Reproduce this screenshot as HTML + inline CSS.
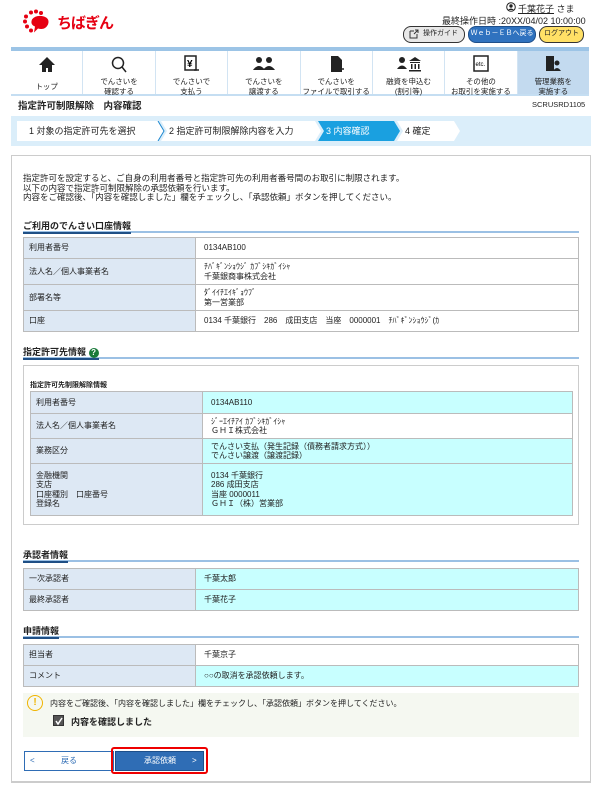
<!DOCTYPE html>
<html><head><meta charset="utf-8">
<style>
*{margin:0;padding:0;box-sizing:border-box}
body{width:600px;height:796px;background:#fff;font-family:"Liberation Sans","Noto Sans CJK JP",sans-serif;font-size:8.5px;color:#222;position:relative;overflow:hidden}
.a{position:absolute}
.nav{left:11px;top:47px;width:578px;height:49px;border-top:4px solid #9cc4e6;border-bottom:2px solid #c5def2;display:flex}
.nav div{flex:1;border-right:1px solid #d2e4f3;text-align:center;font-size:7.5px;line-height:10px;padding-top:4px;position:relative}
.nav div:last-child{border-right:none;background:#c3daef}
.nav svg{display:block;margin:0 auto 4px;height:18px}
.steps{left:11px;top:116px;width:580px;height:30px;background:#dbeefa}
.st{position:absolute;top:5px;height:20px;line-height:20px;font-size:9px;padding-left:12px}
.box{left:11px;top:155px;width:580px;height:628px;border:1px solid #ccc;border-bottom:2px solid #ccc}
h3{position:absolute;font-size:9px;font-weight:bold;left:23px;width:556px;border-bottom:2px solid #9bc0e4;height:12px;line-height:11px}
h3 span{border-bottom:2px solid #1f4f85;display:inline-block;height:13px}
table{position:absolute;border-collapse:collapse;font-size:8px}
td{border:1px solid #bbb;padding:0 8px 0 8px;line-height:9.5px}
td.l{background:#dde8f4;width:172px;padding-left:5px}
td.c{background:#c8ffff}
</style></head><body>
<svg class="a" style="left:22px;top:9px" width="30" height="27" viewBox="0 0 30 26">
<g fill="#e60012"><circle cx="9" cy="3" r="2"/><circle cx="14" cy="2" r="2"/><circle cx="19" cy="3.5" r="2"/><circle cx="4" cy="7" r="2"/><circle cx="3" cy="12" r="2"/><circle cx="5" cy="17" r="2"/><circle cx="9" cy="21" r="2"/>
<path d="M10 10 Q14 5 22 7 Q28 9 26 15 Q23 21 16 19 L12 23 L13 17 Q8 15 10 10Z"/></g></svg>
<div class="a" style="left:57px;top:12px;font-size:15px;font-weight:bold;color:#e60012;letter-spacing:-1px">ちばぎん</div>
<svg class="a" style="left:506px;top:2px" width="10" height="10" viewBox="0 0 10 10"><circle cx="5" cy="5" r="4.3" fill="none" stroke="#222"/><circle cx="5" cy="4" r="1.7" fill="#222"/><path d="M2 8 Q5 5 8 8" fill="#222"/></svg>
<div class="a" style="left:518px;top:2px;font-size:9px"><u>千葉花子</u> さま</div>
<div class="a" style="left:442px;top:14px;font-size:9px">最終操作日時 :20XX/04/02 10:00:00</div>
<div class="a" style="left:403px;top:26px;width:62px;height:17px;border:1.5px solid #333;border-radius:8px;background:#e8e8e8;font-size:7px;line-height:14px;padding-left:19px">操作ガイド</div>
<svg class="a" style="left:409px;top:29px" width="10" height="10" viewBox="0 0 10 10"><path d="M1 2h4M1 2v7h7V5M5 5l4-4M6 1h3v3" fill="none" stroke="#333"/></svg>
<div class="a" style="left:468px;top:26px;width:68px;height:17px;border:1.5px solid #1e4f8a;border-radius:8px;background:#2f72bf;color:#fff;font-size:7px;line-height:14px;text-align:center">Ｗｅｂ－ＥＢへ戻る</div>
<div class="a" style="left:539px;top:26px;width:45px;height:17px;border:1.5px solid #333;border-radius:8px;background:#ffe066;font-size:7px;line-height:14px;text-align:center">ログアウト</div>
<div class="a nav">
<div><svg viewBox="0 0 20 18" width="20"><path d="M10 2L2 10h3v7h4v-4h2v4h4v-7h3z" fill="#222"/></svg><span style="position:relative;top:5px">トップ</span></div>
<div><svg viewBox="0 0 20 18" width="20"><circle cx="9" cy="8" r="5.5" fill="none" stroke="#222" stroke-width="1.5"/><path d="M13 12l4 5" stroke="#222" stroke-width="1.5"/></svg>でんさいを<br>確認する</div>
<div><svg viewBox="0 0 20 18" width="20"><rect x="4" y="1" width="11" height="14" fill="none" stroke="#222" stroke-width="1.5"/><text x="6" y="12" font-size="10" font-weight="bold">¥</text><path d="M13 15h5" stroke="#222" stroke-width="1.5"/></svg>でんさいで<br>支払う</div>
<div><svg viewBox="0 0 24 18" width="24"><circle cx="7" cy="5" r="3" fill="#222"/><circle cx="17" cy="5" r="3" fill="#222"/><path d="M1 15Q7 7 13 15zM11 15Q17 7 23 15z" fill="#222"/></svg>でんさいを<br>譲渡する</div>
<div><svg viewBox="0 0 20 18" width="20"><path d="M5 1h7l4 4v12H5z" fill="#222"/><path d="M12 14h6" stroke="#222" stroke-width="1.5"/></svg>でんさいを<br>ファイルで取引する</div>
<div><svg viewBox="0 0 26 18" width="26"><circle cx="6" cy="5" r="3" fill="#222"/><path d="M1 14Q6 7 11 14z" fill="#222"/><path d="M13 6l6-4 6 4zM14 7h10v1H14zM15 9h1.5v5H15zM18.5 9H20v5h-1.5zM22 9h1.5v5H22zM13 15h12v1.5H13z" fill="#222"/></svg>融資を申込む<br>(割引等)</div>
<div><svg viewBox="0 0 20 18" width="20"><rect x="3" y="1" width="14" height="15" fill="none" stroke="#222" stroke-width="1.5"/><text x="4.5" y="11" font-size="6">etc.</text></svg>その他の<br>お取引を実施する</div>
<div><svg viewBox="0 0 20 18" width="20"><rect x="3" y="1" width="8" height="15" fill="#222"/><circle cx="14" cy="8" r="2.5" fill="#222"/><path d="M10 16Q14 10 18 16z" fill="#222"/></svg>管理業務を<br>実施する</div>
</div>
<div class="a" style="left:18px;top:98px;font-size:9.5px;font-weight:bold">指定許可制限解除　内容確認</div>
<div class="a" style="left:532px;top:100px;font-size:7.5px">SCRUSRD1105</div>
<div class="a steps">
<svg class="a" style="left:6px;top:5px" width="448" height="20" viewBox="0 0 448 20">
<path d="M0 0H141L147 10L141 20H0Z" fill="#fff"/>
<path d="M144 0H298L304 10L298 20H144L150 10Z" fill="#fff"/>
<path d="M141 0L147 10L141 20" fill="none" stroke="#1e88d0"/>
<path d="M301 0H377L383 10L377 20H301L307 10Z" fill="#1aa0e0"/>
<path d="M380 0H437L443 10L437 20H380L386 10Z" fill="#fff"/>
</svg>
<div class="st" style="left:6px">1 対象の指定許可先を選択</div>
<div class="st" style="left:146px">2 指定許可制限解除内容を入力</div>
<div class="st" style="left:303px;color:#fff">3 内容確認</div>
<div class="st" style="left:382px">4 確定</div>
</div>
<div class="a box"></div>
<div class="a" style="left:23px;top:174px;font-size:8.5px;line-height:9.5px">指定許可を設定すると、ご自身の利用者番号と指定許可先の利用者番号間のお取引に制限されます。<br>以下の内容で指定許可制限解除の承認依頼を行います。<br>内容をご確認後、「内容を確認しました」欄をチェックし、「承認依頼」ボタンを押してください。</div>

<h3 style="top:221px"><span>ご利用のでんさい口座情報</span></h3>
<table style="left:23px;top:237px;width:556px">
<tr style="height:21px"><td class="l">利用者番号</td><td>0134AB100</td></tr>
<tr style="height:26px"><td class="l">法人名／個人事業者名</td><td>ﾁﾊﾞｷﾞﾝｼｮｳｼﾞ ｶﾌﾞｼｷｶﾞｲｼｬ<br>千葉銀商事株式会社</td></tr>
<tr style="height:26px"><td class="l">部署名等</td><td>ﾀﾞｲｲﾁｴｲｷﾞｮｳﾌﾞ<br>第一営業部</td></tr>
<tr style="height:21px"><td class="l">口座</td><td>0134 千葉銀行　286　成田支店　当座　0000001　ﾁﾊﾞｷﾞﾝｼｮｳｼﾞ(ｶ</td></tr>
</table>

<h3 style="top:347px"><span>指定許可先情報 <b style="display:inline-block;width:10px;height:10px;border-radius:50%;background:#1a7a3a;color:#fff;font-size:8px;line-height:10px;text-align:center">?</b></span></h3>
<div class="a" style="left:23px;top:365px;width:556px;height:160px;border:1px solid #ccc"></div>
<div class="a" style="left:30px;top:380px;font-size:7px;font-weight:bold">指定許可先制限解除情報</div>
<table style="left:30px;top:391px;width:543px">
<tr style="height:22px"><td class="l" style="width:166px">利用者番号</td><td class="c">0134AB110</td></tr>
<tr style="height:25px"><td class="l">法人名／個人事業者名</td><td>ｼﾞｰｴｲﾁｱｲ ｶﾌﾞｼｷｶﾞｲｼｬ<br>ＧＨＩ株式会社</td></tr>
<tr style="height:25px"><td class="l">業務区分</td><td class="c">でんさい支払（発生記録（債務者請求方式））<br>でんさい譲渡（譲渡記録）</td></tr>
<tr style="height:52px"><td class="l">金融機関<br>支店<br>口座種別　口座番号<br>登録名</td><td class="c">0134 千葉銀行<br>286 成田支店<br>当座 0000011<br>ＧＨＩ（株）営業部</td></tr>
</table>

<h3 style="top:550px"><span>承認者情報</span></h3>
<table style="left:23px;top:568px;width:556px">
<tr style="height:21px"><td class="l">一次承認者</td><td class="c">千葉太郎</td></tr>
<tr style="height:21px"><td class="l">最終承認者</td><td class="c">千葉花子</td></tr>
</table>

<h3 style="top:626px"><span>申請情報</span></h3>
<table style="left:23px;top:644px;width:556px">
<tr style="height:21px"><td class="l">担当者</td><td>千葉京子</td></tr>
<tr style="height:21px"><td class="l">コメント</td><td class="c">○○の取消を承認依頼します。</td></tr>
</table>

<div class="a" style="left:23px;top:693px;width:556px;height:44px;background:#f5f8f1"></div>
<div class="a" style="left:27px;top:695px;width:16px;height:16px;border:1.5px solid #f0b400;border-radius:50%;color:#f0b400;font-size:10px;font-weight:bold;text-align:center;line-height:13px">!</div>
<div class="a" style="left:50px;top:698px;font-size:8px">内容をご確認後、「内容を確認しました」欄をチェックし、「承認依頼」ボタンを押してください。</div>
<div class="a" style="left:53px;top:715px;width:11px;height:11px;background:#555;border:1px solid #333"></div>
<svg class="a" style="left:54px;top:716px" width="10" height="10" viewBox="0 0 10 10"><path d="M2 5l2 3 4-6" fill="none" stroke="#fff" stroke-width="1.5"/></svg>
<div class="a" style="left:71px;top:715px;font-size:9px;font-weight:bold">内容を確認しました</div>

<div class="a" style="left:24px;top:751px;width:90px;height:20px;border:1px solid #2f6db5;background:#fff;color:#2f6db5;font-size:8px;line-height:18px"><span style="position:absolute;left:5px">&lt;</span><span style="position:absolute;left:36px">戻る</span></div>
<div class="a" style="left:111px;top:747px;width:97px;height:27px;border:2.5px solid #e00;border-radius:3px"></div>
<div class="a" style="left:115px;top:751px;width:89px;height:20px;background:#2f6db5;border:1px solid #1e4f8a;color:#fff;font-size:8px;line-height:18px"><span style="position:absolute;left:28px">承認依頼</span><span style="position:absolute;left:76px">&gt;</span></div>
</body></html>
